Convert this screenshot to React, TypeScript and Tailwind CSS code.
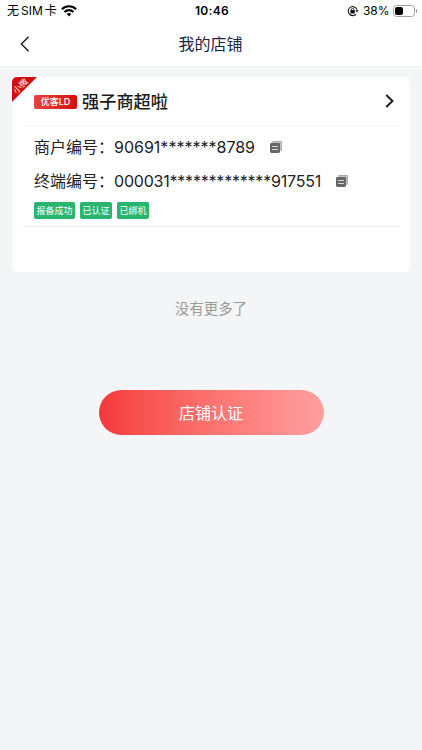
const rows = [
    { label: '商户编号：', value: '90691*******8789', style: 'w-[141px]', gap: 'ml-[15px]' },
    { label: '终端编号：', value: '000031*************917551', style: 'w-[207px] tracking-[-0.21px]', gap: 'ml-[15px]' },
]

const tags = ['报备成功', '已认证', '已绑机']

const CopyIcon = () => (
    <svg width="12" height="12" viewBox="0 0 12 12" fill="none">
        <rect x="2" y="0" width="10" height="10" rx="1.4" fill="#a8a8a8" />
        <path d="M2 1.5H10.5V10" stroke="#d5d5d5" strokeWidth=".6" />
        <rect x="0" y="2" width="10" height="10" rx="1.4" fill="#666" />
        <path d="M2 5.5H8M2 8.5H8" stroke="#d8d8d8" />
    </svg>
)

const WifiIcon = () => (
    <svg width="16" height="12" viewBox="0 0 16 12" fill="none" stroke="#000" strokeWidth="2.1">
        <path d="M.9 4.2A10.2 10.2 0 0 1 15.1 4.2" />
        <path d="M3.5 6.9A6.5 6.5 0 0 1 12.5 6.9" />
        <path d="M8 11.5L5.6 9.1A3.5 3.5 0 0 1 10.4 9.1Z" fill="#000" stroke="none" />
    </svg>
)

const LockIcon = () => (
    <svg width="12" height="12" viewBox="0 0 12 12" fill="none" stroke="#111">
        <path d="M9 9.2A4.5 4.5 0 1 1 10 4.6" strokeWidth="1.1" />
        <path d="M8.3 5.2H11.6L10 7.6Z" fill="#111" stroke="none" />
        <rect x="3.4" y="5" width="4.4" height="3.6" rx=".4" fill="#111" stroke="none" />
        <path d="M4.4 5.5V4.5A1.2 1.2 0 0 1 6.8 4.5V5.5" strokeWidth=".9" />
    </svg>
)

const App = () => {
    return (
        <div className="flex h-screen w-full flex-col overflow-hidden bg-[#f3f5f7] font-['Inter','Noto_Sans_CJK_SC',sans-serif] text-[#222]">
            <div className="grid h-[22px] shrink-0 grid-cols-3 items-center bg-white pl-[7px] pr-[5px] text-[12px] text-black">
                <div className="flex items-center gap-[5px]">
                    <span className="w-[49px] whitespace-nowrap">无<span className="mx-[2px]">SIM</span>卡</span>
                    <WifiIcon />
                </div>
                <span className="text-center font-semibold tracking-[0.3px]">10:46</span>
                <div className="flex items-center justify-end">
                    <LockIcon />
                    <span className="ml-[4px] mr-[3px]">38%</span>
                    <div className="flex h-[12px] w-[22px] rounded-[3.5px] border border-[#a3a3a3] p-px">
                        <div className="w-[8px] rounded-[2px] bg-black"></div>
                    </div>
                    <div className="ml-px h-[4px] w-[1.5px] rounded-r-full bg-[#999]"></div>
                </div>
            </div>

            <div className="flex h-[44px] shrink-0 items-center bg-white px-[20px]">
                <svg className="-mt-px" width="10" height="16" viewBox="0 0 10 16" fill="none" stroke="#222" strokeWidth="1.5">
                    <path d="M8.6 .8L1.4 8L8.6 15.2" />
                </svg>
                <h1 className="flex-1 pr-[11px] text-center text-[16px] text-[#1b2440]">我的店铺</h1>
            </div>

            <div className="relative mx-[12px] mt-[11px] h-[195px] w-[398px] shrink-0 rounded-[5px] bg-white px-[11px]">
                <div className="absolute left-0 top-0 h-[25px] w-[25px] rounded-tl-[5px] bg-[#d20f0c] [clip-path:polygon(0_0,100%_0,0_100%)]"></div>
                <span className="absolute left-[-1px] top-[3px] w-[19px] -rotate-45 whitespace-nowrap text-center text-[8.5px] leading-[12px] text-white">小微</span>
                <div className="flex h-[50px] items-center border-b border-[#f5f5f5] pl-[11px] pr-[5px]">
                    <span className="flex h-[14px] w-[43px] items-center justify-center rounded-[2px] bg-linear-to-r from-[#e84040] to-[#d20d0d] text-[9px] font-medium text-white">优客LD</span>
                    <h2 className="ml-[5px] flex-1 text-[17.2px] font-medium text-[#1a1a1a]">强子商超啦</h2>
                    <svg className="-mt-[2px]" width="9" height="14" viewBox="0 0 9 14" fill="none" stroke="#1a1a1a" strokeWidth="1.9">
                        <path d="M1.3 1L7.5 7L1.3 13" />
                    </svg>
                </div>
                <div className="flex h-[100px] flex-col border-b border-[#ededed] pl-[11px] pt-[3px]">
                    {rows.map((row) => (
                        <div key={row.label} className="flex h-[34px] items-center text-[16px]">
                            <span className="w-[80px]">{row.label}</span>
                            <span className={`${row.style} whitespace-nowrap`}>{row.value}</span>
                            <span className={`${row.gap} -mt-px`}><CopyIcon /></span>
                        </div>
                    ))}
                    <div className="mt-[4px] flex gap-[5px]">
                        {tags.map((tag) => (
                            <span key={tag} className="flex h-[17px] items-center rounded-[2px] bg-[#2ab56f] px-[2.5px] text-[9px] text-white">{tag}</span>
                        ))}
                    </div>
                </div>
            </div>

            <p className="mt-[26px] text-center text-[14.4px] leading-[22px] text-[#999]">没有更多了</p>
            <button className="mx-auto mt-[70px] h-[45px] w-[225px] shrink-0 rounded-full bg-linear-to-r from-[#f4383b] to-[#ff9fa0] text-[16px] text-white">店铺认证</button>
        </div>
    )
}

export default App
